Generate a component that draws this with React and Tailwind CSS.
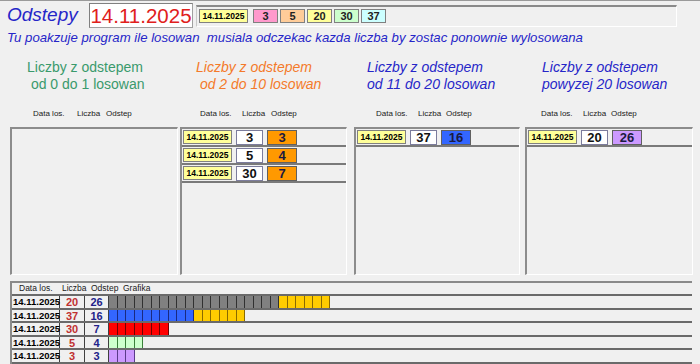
const topNums = [
  { n: 3, bg: "bg-[#ff99cc]" },
  { n: 5, bg: "bg-[#ffcc99]" },
  { n: 20, bg: "bg-[#ffff99]" },
  { n: 30, bg: "bg-[#ccffcc]" },
  { n: 37, bg: "bg-[#ccffff]" },
];

const columns = [
  {
    box: "ml-[10px] w-[168px]",
    title: "pl-[17px] text-[#3a9a6c]",
    l1: "Liczby z odstepem",
    l2: " od 0 do 1 losowan",
    head: ["pl-[23px]", "w-[44px]", "w-[29px]"],
    fill: "bg-[#ff9900]",
    rows: [],
  },
  {
    box: "ml-[2px] w-[167px]",
    title: "pl-[16px] italic text-[#f47a2a]",
    l1: "Liczby z odstepem",
    l2: " od 2 do 10 losowan",
    head: ["pl-[20px]", "w-[42px]", "w-[29px]"],
    fill: "bg-[#ff9900]",
    rows: [[3, 3], [5, 4], [30, 7]],
  },
  {
    box: "ml-[7px] w-[166px]",
    title: "pl-[13px] italic text-[#2626c8]",
    l1: "Liczby z odstepem",
    l2: "od 11 do 20 losowan",
    head: ["pl-[22px]", "w-[42px]", "w-[28px]"],
    fill: "bg-[#3366ff]",
    rows: [[37, 16]],
  },
  {
    box: "ml-[5px] w-[168px]",
    title: "pl-[17px] italic text-[#2626c8]",
    l1: "Liczby z odstepem",
    l2: "powyzej 20 losowan",
    head: ["pl-[16px]", "w-[42px]", "w-[28px]"],
    fill: "bg-[#cc99ff]",
    rows: [[20, 26]],
  },
];

const gray = "bg-[#808080] border-[#303030]";
const yellow = "bg-[#ffcc00] border-[#8a6a00]";
const history = [
  { n: 20, d: 26, bars: [[20, gray], [6, yellow]] },
  { n: 37, d: 16, bars: [[10, "bg-[#3366ff] border-[#1a2a80]"], [6, yellow]] },
  { n: 30, d: 7, bars: [[7, "bg-[#ff0000] border-[#700000]"]] },
  { n: 5, d: 4, bars: [[4, "bg-[#ccffcc] border-[#3a803a]"]] },
  { n: 3, d: 3, bars: [[3, "bg-[#cc99ff] border-[#5a3a8a]"]] },
];

function DateChip() {
  return (
    <div className="w-[49px] h-[14px] bg-[#ffff99] border border-[#808080] text-[8.5px] font-bold leading-[12px] text-center text-black">
      14.11.2025
    </div>
  );
}

function Column({ c }) {
  return (
    <div className={`${c.box} flex flex-col`}>
      <div className={`h-[52px] pt-[3px] text-[14px] leading-[17px] whitespace-pre ${c.title}`}>
        <div>{c.l1}</div>
        <div>{c.l2}</div>
      </div>
      <div className={`h-[12px] flex text-[8px] leading-[12px] text-[#202020] ${c.head[0]}`}>
        <span className={c.head[1]}>Data los.</span>
        <span className={c.head[2]}>Liczba</span>
        <span>Odstep</span>
      </div>
      <div className="mt-[7px] h-[148px] border-t-2 border-l-2 border-t-[#8c8c8c] border-l-[#8c8c8c] border-r border-b border-r-white border-b-white">
        {c.rows.map(([n, d], i) => (
          <div key={i} className="h-[18px] flex items-center gap-[4px] pl-[1px] border-b-2 border-[#7a7a7a]">
            <DateChip />
            <div className="w-[27px] h-[15px] bg-white border border-[#7c7c9c] text-[13px] font-bold leading-[13px] text-center text-[#111]">
              {n}
            </div>
            <div className={`w-[30px] h-[15px] border border-[#606060] text-[13px] font-bold leading-[13px] text-center text-[#1a1a40] ${c.fill}`}>
              {d}
            </div>
          </div>
        ))}
      </div>
    </div>
  );
}

export default function App() {
  return (
    <div className="w-[700px] h-[364px] overflow-hidden bg-[#f0f0f0] border-t border-[#9a9a9a] flex flex-col font-['Liberation_Sans',Arial,sans-serif]">
      <div className="h-[29px] flex items-start">
        <div className="ml-[7px] mt-[4px] w-[82px] text-[19px] leading-[20px] italic text-[#2626c8]">Odstepy</div>
        <div className="mt-[2px] w-[104px] h-[25px] bg-white border border-[#a0a0a0] border-t-[#808080] border-l-[#808080] text-[20.5px] leading-[23px] text-center text-[#e0201c]">
          14.11.2025
        </div>
        <div className="ml-[3px] mt-[4px] w-[481px] h-[22px] border-t-2 border-t-[#8a8a8a] border-l border-l-[#c8c8c8] border-b border-b-white border-r border-r-white flex items-start pt-[2px] pl-[2px] gap-[2px]">
          <DateChip />
          <div className="w-[1px]" />
          {topNums.map((t) => (
            <div key={t.n} className={`w-[25px] h-[14px] border border-[#808080] text-[11px] font-bold leading-[12px] text-center text-[#222] ${t.bg}`}>
              {t.n}
            </div>
          ))}
        </div>
      </div>

      <div className="h-[15px] pl-[7px] text-[13.2px] leading-[15px] italic text-[#2626c8] whitespace-pre">
        Tu poakzuje program ile losowan  musiala odczekac kazda liczba by zostac ponownie wylosowana
      </div>

      <div className="mt-[11px] flex">
        {columns.map((c, i) => (
          <Column key={i} c={c} />
        ))}
      </div>

      <div className="mt-[6px] ml-[10px] w-[682px] flex-1 border-t-2 border-l-2 border-[#8a8a8a]">
        <div className="h-[11px] flex text-[8.5px] leading-[11px] text-[#202020]">
          <span className="pl-[7px] w-[50px]">Data los.</span>
          <span className="w-[29px]">Liczba</span>
          <span className="w-[32px]">Odstep</span>
          <span>Grafika</span>
        </div>
        {history.map((h, i) => (
          <div key={i} className="h-[13.5px] flex border-t-2 border-[#6a6a6a]">
            <div className="w-[48px] pl-[1px] text-[9.5px] font-bold leading-[12px] text-black border-r border-[#404040]">14.11.2025</div>
            <div className="w-[25px] text-[11px] font-bold leading-[12px] text-center text-[#c03030] border-r border-[#404040]">{h.n}</div>
            <div className="w-[24px] text-[11px] font-bold leading-[12px] text-center text-[#22228a] border-r border-[#404040]">{h.d}</div>
            <div className="flex-1 flex">
              {h.bars.flatMap(([count, cls], bi) =>
                Array.from({ length: count }, (_, k) => (
                  <div key={`${bi}-${k}`} className={`w-[8.5px] h-full border-r ${cls}`} />
                ))
              )}
            </div>
          </div>
        ))}
        <div className="border-t-2 border-[#6a6a6a]" />
      </div>
    </div>
  );
}
